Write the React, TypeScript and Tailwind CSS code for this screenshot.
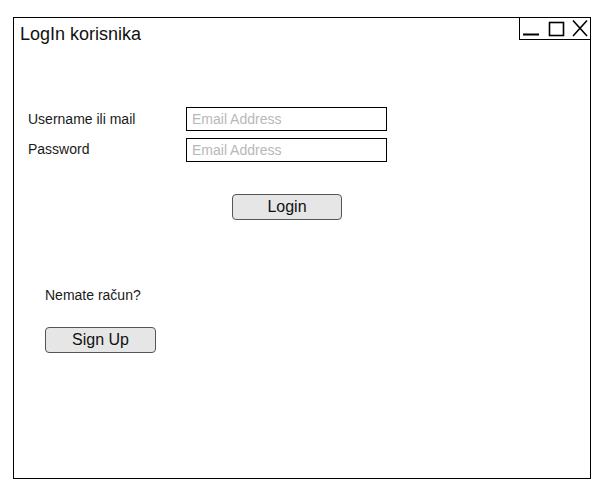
export default function App() {
  return (
    <div className="w-[602px] h-[498px] bg-white pt-[17px] pl-[13px] font-['Liberation_Sans',Arial,sans-serif] text-[#1a1a1a]">
      <div className="w-[578px] h-[462px] border border-black flex flex-col">
        {/* title bar */}
        <div className="flex items-start">
          <div className="pl-[6px] pt-[6px] text-[18px] leading-[20px] text-[#111]">LogIn korisnika</div>
          <div className="ml-auto h-[22px] w-[71px] border-l border-b border-black">
            <svg width="70" height="21" viewBox="0 0 70 21" fill="none" stroke="#000" strokeWidth="1.6">
              <line x1="3" y1="16.5" x2="19" y2="16.5" strokeWidth="2" />
              <rect x="29.5" y="4.5" width="14" height="13" />
              <path d="M53 2.5 L67 18 M67 2.5 L53 18" />
            </svg>
          </div>
        </div>

        {/* form */}
        <div className="mt-[63px] pl-[14px] flex flex-col gap-[7px]">
          <div className="flex items-center h-[24px]">
            <span className="w-[158px] text-[14px] leading-[16px] -mt-[1px]">Username ili mail</span>
            <input
              placeholder="Email Address"
              className="w-[201px] h-[24px] border border-black pl-[5px] text-[14px] outline-none placeholder:text-[#b8b8b8]"
            />
          </div>
          <div className="flex items-center h-[24px]">
            <span className="w-[158px] text-[14px] leading-[16px] -mt-[2px]">Password</span>
            <input
              placeholder="Email Address"
              className="w-[201px] h-[24px] border border-black pl-[5px] text-[14px] outline-none placeholder:text-[#b8b8b8]"
            />
          </div>
        </div>

        <button className="mt-[32px] ml-[218px] w-[110px] h-[26px] rounded-[4px] border border-[#555] bg-[#e6e6e6] text-[16px] leading-[18px] text-[#111]">
          Login
        </button>

        <div className="mt-[67px] ml-[31px] text-[14px] leading-[16px]">Nemate račun?</div>

        <button className="mt-[24px] ml-[31px] w-[111px] h-[26px] rounded-[4px] border border-[#555] bg-[#e6e6e6] text-[16px] leading-[18px] text-[#111]">
          Sign Up
        </button>
      </div>
    </div>
  );
}
